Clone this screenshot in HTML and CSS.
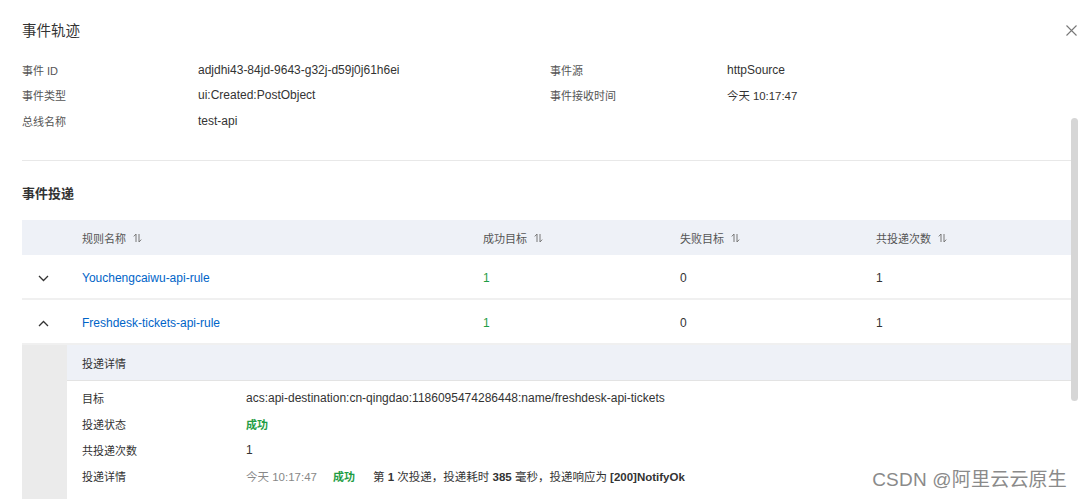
FILE: index.html
```html
<!DOCTYPE html>
<html lang="zh-CN">
<head>
<meta charset="utf-8">
<title>事件轨迹</title>
<link rel="stylesheet" href="styles.css">
</head>
<body>
<div class="drawer">
  <header class="drawer-head">
    <h2 class="drawer-title">事件轨迹</h2>
    <button class="close" aria-label="关闭">
      <svg width="11" height="11" viewBox="0 0 11 11"><path d="M0.5 0.5 L10.5 10.5 M10.5 0.5 L0.5 10.5" stroke="#777" stroke-width="1.1" fill="none"/></svg>
    </button>
  </header>
  <div class="drawer-body">
    <section class="info">
      <span class="label">事件 ID</span><span class="value">adjdhi43-84jd-9643-g32j-d59j0j61h6ei</span>
      <span class="label">事件源</span><span class="value">httpSource</span>
      <span class="label">事件类型</span><span class="value">ui:Created:PostObject</span>
      <span class="label">事件接收时间</span><span class="value mixed">今天 10:17:47</span>
      <span class="label">总线名称</span><span class="value">test-api</span>
    </section>
    <div class="divider"></div>
    <h3 class="section-title">事件投递</h3>
    <div class="table">
      <div class="row head">
        <span class="cell expand"></span>
        <span class="cell">规则名称<svg class="sort" width="9" height="10" viewBox="0 0 9 10"><path d="M3 1 V9 M3 1 L0.8 3.4 M6 1 V9 M6 9 L8.2 6.6" stroke="#777" stroke-width="1" fill="none"/></svg></span>
        <span class="cell">成功目标<svg class="sort" width="9" height="10" viewBox="0 0 9 10"><path d="M3 1 V9 M3 1 L0.8 3.4 M6 1 V9 M6 9 L8.2 6.6" stroke="#777" stroke-width="1" fill="none"/></svg></span>
        <span class="cell">失败目标<svg class="sort" width="9" height="10" viewBox="0 0 9 10"><path d="M3 1 V9 M3 1 L0.8 3.4 M6 1 V9 M6 9 L8.2 6.6" stroke="#777" stroke-width="1" fill="none"/></svg></span>
        <span class="cell">共投递次数<svg class="sort" width="9" height="10" viewBox="0 0 9 10"><path d="M3 1 V9 M3 1 L0.8 3.4 M6 1 V9 M6 9 L8.2 6.6" stroke="#777" stroke-width="1" fill="none"/></svg></span>
      </div>
      <div class="row body">
        <span class="cell expand"><svg width="11" height="7" viewBox="0 0 11 7"><path d="M1 1 L5.5 5.5 L10 1" stroke="#333" stroke-width="1.3" fill="none"/></svg></span>
        <span class="cell"><a class="link" href="#">Youchengcaiwu-api-rule</a></span>
        <span class="cell ok">1</span>
        <span class="cell">0</span>
        <span class="cell">1</span>
      </div>
      <div class="row body">
        <span class="cell expand"><svg width="11" height="7" viewBox="0 0 11 7"><path d="M1 6 L5.5 1.5 L10 6" stroke="#333" stroke-width="1.3" fill="none"/></svg></span>
        <span class="cell"><a class="link" href="#">Freshdesk-tickets-api-rule</a></span>
        <span class="cell ok">1</span>
        <span class="cell">0</span>
        <span class="cell">1</span>
      </div>
      <div class="expanded">
        <div class="gutter"></div>
        <div class="detail">
          <div class="detail-head">投递详情</div>
          <div class="detail-grid">
            <span class="dlabel">目标</span><span class="dvalue">acs:api-destination:cn-qingdao:1186095474286448:name/freshdesk-api-tickets</span>
            <span class="dlabel">投递状态</span><span class="dvalue status">成功</span>
            <span class="dlabel">共投递次数</span><span class="dvalue">1</span>
            <span class="dlabel">投递详情</span>
            <span class="dvalue log"><span class="time">今天 10:17:47</span><span class="log-status">成功</span><span class="msg">第 <b>1</b> 次投递，投递耗时 <b>385</b> 毫秒，投递响应为 <b>[200]NotifyOk</b></span></span>
          </div>
        </div>
      </div>
    </div>
  </div>
  <div class="scroll-thumb"></div>
  <div class="watermark">CSDN @阿里云云原生</div>
</div>
</body>
</html>
```

FILE: styles.css
```css
* { box-sizing: border-box; }
html, body {
  margin: 0;
  padding: 0;
  background: #fff;
}
body {
  font-family: "Liberation Sans", "Noto Sans CJK SC", sans-serif;
  font-size: 12px;
  color: #333;
  width: 1080px;
  height: 499px;
  overflow: hidden;
}
.drawer {
  position: relative;
  width: 1080px;
  height: 499px;
  overflow: hidden;
}
.drawer-head {
  height: 57px;
  padding: 22px 3px 0 22px;
  display: flex;
  justify-content: space-between;
  align-items: flex-start;
}
.drawer-title {
  margin: 0;
  font-size: 14.5px;
  line-height: 18px;
  font-weight: normal;
  color: #333;
}
.close {
  border: 0;
  background: none;
  padding: 0;
  margin-top: 3px;
  width: 11px;
  height: 11px;
  display: flex;
}
.drawer-body {
  padding: 0 8px 0 22px;
}
.info {
  display: grid;
  grid-template-columns: 176px 352px 177px 1fr;
  grid-auto-rows: 25.5px;
  align-items: center;
}
.label {
  color: #555;
  font-size: 11px;
}
.value { color: #333; }
.value.mixed { font-size: 11.4px; }
.divider {
  margin-top: 26.5px;
  height: 1px;
  background: #e8e8e8;
}
.section-title {
  margin: 23px 0 16px;
  font-size: 13px;
  line-height: 20px;
  font-weight: bold;
  color: #333;
}
.row {
  display: grid;
  grid-template-columns: 45px 401px 197px 196px 1fr;
  align-items: center;
}
.row.head {
  height: 35px;
  background: #eef1f7;
  color: #555;
  font-size: 11px;
}
.row.body {
  height: 45px;
  padding-top: 3px;
  border-bottom: 2px solid #f0f0f0;
}
.cell {
  padding-left: 15px;
  display: flex;
  align-items: center;
}
.cell.expand {
  padding-left: 16px;
}
.sort { margin-left: 7px; }
.link {
  color: #0064c8;
  text-decoration: none;
}
.ok { color: #1f9d45; }
.expanded {
  display: flex;
}
.gutter {
  width: 45px;
  background: #ebebeb;
  flex: none;
}
.detail {
  flex: 1;
}
.detail-head {
  height: 36px;
  padding-left: 15px;
  display: flex;
  align-items: center;
  background: #eef1f7;
  border-bottom: 1px solid #e3e3e3;
  color: #333;
  font-size: 11px;
}
.detail-grid {
  display: grid;
  grid-template-columns: 164px 1fr;
  grid-auto-rows: 26px;
  align-items: center;
  padding: 4px 0 10px 15px;
}
.dlabel {
  color: #333;
  font-size: 11px;
}
.dvalue { color: #333; }
.dvalue.status {
  color: #1f9d45;
  font-weight: bold;
  font-size: 11px;
}
.log {
  display: flex;
  align-items: center;
  font-size: 11.5px;
}
.log .time {
  color: #888;
  width: 87px;
}
.log .log-status {
  color: #1f9d45;
  font-weight: bold;
  font-size: 11px;
  width: 40px;
}
.scroll-thumb {
  position: absolute;
  right: 2px;
  top: 118px;
  width: 7px;
  height: 283px;
  border-radius: 4px;
  background: #d6d6d6;
}
.watermark {
  position: absolute;
  right: 13px;
  bottom: 7px;
  font-size: 19px;
  line-height: 24px;
  color: #8a8a8a;
  text-shadow: 0 0 2px #fff;
  letter-spacing: 0.2px;
}
```
